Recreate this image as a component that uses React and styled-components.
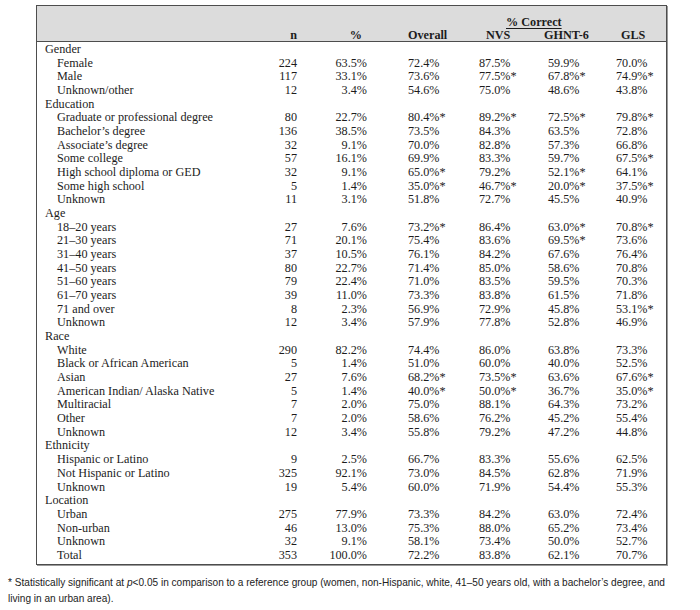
import React from 'react'
import styled, { createGlobalStyle } from 'styled-components'

const GlobalStyle = createGlobalStyle`
  html, body {
    margin: 0;
    padding: 0;
    background: #fff;
  }
`

const COLUMNS = '236px 28px 70px 100px 70px 70px 1fr'

const groups = [
  {
    title: 'Gender',
    rows: [
      ['Female', '224', '63.5%', '72.4%', '87.5%', '59.9%', '70.0%'],
      ['Male', '117', '33.1%', '73.6%', '77.5%*', '67.8%*', '74.9%*'],
      ['Unknown/other', '12', '3.4%', '54.6%', '75.0%', '48.6%', '43.8%']
    ]
  },
  {
    title: 'Education',
    rows: [
      ['Graduate or professional degree', '80', '22.7%', '80.4%*', '89.2%*', '72.5%*', '79.8%*'],
      ['Bachelor’s degree', '136', '38.5%', '73.5%', '84.3%', '63.5%', '72.8%'],
      ['Associate’s degree', '32', '9.1%', '70.0%', '82.8%', '57.3%', '66.8%'],
      ['Some college', '57', '16.1%', '69.9%', '83.3%', '59.7%', '67.5%*'],
      ['High school diploma or GED', '32', '9.1%', '65.0%*', '79.2%', '52.1%*', '64.1%'],
      ['Some high school', '5', '1.4%', '35.0%*', '46.7%*', '20.0%*', '37.5%*'],
      ['Unknown', '11', '3.1%', '51.8%', '72.7%', '45.5%', '40.9%']
    ]
  },
  {
    title: 'Age',
    rows: [
      ['18–20 years', '27', '7.6%', '73.2%*', '86.4%', '63.0%*', '70.8%*'],
      ['21–30 years', '71', '20.1%', '75.4%', '83.6%', '69.5%*', '73.6%'],
      ['31–40 years', '37', '10.5%', '76.1%', '84.2%', '67.6%', '76.4%'],
      ['41–50 years', '80', '22.7%', '71.4%', '85.0%', '58.6%', '70.8%'],
      ['51–60 years', '79', '22.4%', '71.0%', '83.5%', '59.5%', '70.3%'],
      ['61–70 years', '39', '11.0%', '73.3%', '83.8%', '61.5%', '71.8%'],
      ['71 and over', '8', '2.3%', '56.9%', '72.9%', '45.8%', '53.1%*'],
      ['Unknown', '12', '3.4%', '57.9%', '77.8%', '52.8%', '46.9%']
    ]
  },
  {
    title: 'Race',
    rows: [
      ['White', '290', '82.2%', '74.4%', '86.0%', '63.8%', '73.3%'],
      ['Black or African American', '5', '1.4%', '51.0%', '60.0%', '40.0%', '52.5%'],
      ['Asian', '27', '7.6%', '68.2%*', '73.5%*', '63.6%', '67.6%*'],
      ['American Indian/ Alaska Native', '5', '1.4%', '40.0%*', '50.0%*', '36.7%', '35.0%*'],
      ['Multiracial', '7', '2.0%', '75.0%', '88.1%', '64.3%', '73.2%'],
      ['Other', '7', '2.0%', '58.6%', '76.2%', '45.2%', '55.4%'],
      ['Unknown', '12', '3.4%', '55.8%', '79.2%', '47.2%', '44.8%']
    ]
  },
  {
    title: 'Ethnicity',
    rows: [
      ['Hispanic or Latino', '9', '2.5%', '66.7%', '83.3%', '55.6%', '62.5%'],
      ['Not Hispanic or Latino', '325', '92.1%', '73.0%', '84.5%', '62.8%', '71.9%'],
      ['Unknown', '19', '5.4%', '60.0%', '71.9%', '54.4%', '55.3%']
    ]
  },
  {
    title: 'Location',
    rows: [
      ['Urban', '275', '77.9%', '73.3%', '84.2%', '63.0%', '72.4%'],
      ['Non-urban', '46', '13.0%', '75.3%', '88.0%', '65.2%', '73.4%'],
      ['Unknown', '32', '9.1%', '58.1%', '73.4%', '50.0%', '52.7%'],
      ['Total', '353', '100.0%', '72.2%', '83.8%', '62.1%', '70.7%']
    ]
  }
]

// where the body values sit in each numeric column
const valueCols = [
  { align: 'right', pad: 4 },
  { align: 'right', pad: 4 },
  { align: 'left', pad: 37 },
  { align: 'left', pad: 8 },
  { align: 'left', pad: 7 },
  { align: 'left', pad: 5 }
]

// header labels are not quite over the values
const headCols = [
  { label: 'n', align: 'right', pad: 4 },
  { label: '%', align: 'right', pad: 9 },
  { label: 'Overall', align: 'left', pad: 37 },
  { label: 'NVS', align: 'left', pad: 15 },
  { label: 'GHNT-6', align: 'left', pad: 3 },
  { label: 'GLS', align: 'left', pad: 10 }
]

const Page = styled.div`
  padding: 5px 0 0 8px;
  color: #1c1c1c;
`

const Box = styled.div`
  margin-left: 28px;
  width: 631px;
  box-sizing: border-box;
  border: 1px solid #4d4d4d;
  box-shadow: 1px 1px 0 #9a9a9a;
  font-family: 'Liberation Serif', 'Times New Roman', serif;
  font-size: 12.2px;
`

const Head = styled.div`
  background: #dcdcdc;
  border-bottom: 1px solid #4d4d4d;
  padding-top: 10px;
  font-weight: bold;
`

const Row = styled.div`
  display: grid;
  grid-template-columns: ${COLUMNS};
  height: ${(p) => p.h || 13.68}px;
  line-height: ${(p) => p.h || 13.68}px;
  white-space: nowrap;
`

const Span = styled.div`
  grid-column: 4 / 8;
  padding-left: 135px;
`

const Underlined = styled.span`
  text-decoration: underline;
  text-underline-offset: 2px;
`

const Cell = styled.div`
  text-align: ${(p) => p.align};
  padding-left: ${(p) => (p.align === 'left' ? p.pad : 0)}px;
  padding-right: ${(p) => (p.align === 'right' ? p.pad : 0)}px;
`

const Label = styled.div`
  padding-left: ${(p) => (p.sub ? 20 : 8)}px;
`

const Body = styled.div`
  padding: 1px 0 1px;
`

const Note = styled.p`
  margin: 10px 0 0;
  width: 668px;
  font-family: 'Liberation Sans', Arial, sans-serif;
  font-size: 10.1px;
  line-height: 16px;
  color: #222;
`

const App = () => {
  return (
    <Page>
      <GlobalStyle />
      <Box>
        <Head>
          <Row h={13}>
            <Span>
              <Underlined>% Correct</Underlined>
            </Span>
          </Row>
          <Row h={12}>
            <Label />
            {headCols.map((col) => (
              <Cell key={col.label} align={col.align} pad={col.pad}>
                {col.label}
              </Cell>
            ))}
          </Row>
        </Head>
        <Body>
          {groups.map((group) => (
            <React.Fragment key={group.title}>
              <Row>
                <Label>{group.title}</Label>
              </Row>
              {group.rows.map(([label, ...values]) => (
                <Row key={group.title + label}>
                  <Label sub>{label}</Label>
                  {values.map((value, index) => (
                    <Cell key={index} align={valueCols[index].align} pad={valueCols[index].pad}>
                      {value}
                    </Cell>
                  ))}
                </Row>
              ))}
            </React.Fragment>
          ))}
        </Body>
      </Box>
      <Note>
        * Statistically significant at <i>p</i>&lt;0.05 in comparison to a reference group (women, non-Hispanic, white, 41–50 years old, with a bachelor’s degree, and living in an urban area).
      </Note>
    </Page>
  )
}

export default App
